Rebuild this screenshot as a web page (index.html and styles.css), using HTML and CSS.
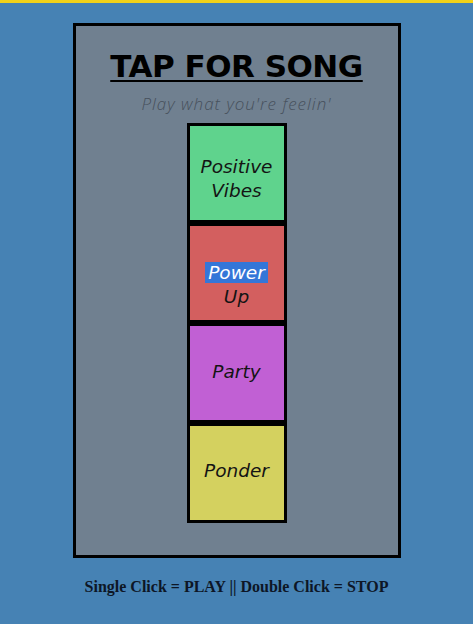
FILE: index.html
```html
<!DOCTYPE html>
<html>
<head>
<meta charset="utf-8">
<link rel="stylesheet" href="styles.css">
</head>
<body>
<main class="card">
  <h1 class="title">TAP FOR SONG</h1>
  <p class="subtitle">Play what you're feelin'</p>
  <div class="buttons">
    <div class="btn btn-green"><div class="label">Positive<br>Vibes</div></div>
    <div class="btn btn-red"><div class="label"><span class="sel">Power</span><br>Up</div></div>
    <div class="btn btn-purple"><div class="label">Party</div></div>
    <div class="btn btn-yellow"><div class="label">Ponder</div></div>
  </div>
</main>
<p class="hint">Single Click = PLAY || Double Click = STOP</p>
</body>
</html>
```
FILE: styles.css
```css
html, body {
  margin: 0;
  padding: 0;
}
body {
  background: #4682b4;
  border-top: 3px solid #f2d21a;
  padding-top: 20px;
  min-height: 600px;
  font-family: "DejaVu Sans", sans-serif;
}
.card {
  width: 322px;
  margin: 0 auto;
  border: 3px solid #000;
  background: #708090;
  padding: 22px 0 32px;
  display: flex;
  flex-direction: column;
  align-items: center;
}
.title {
  margin: 0;
  font-family: "DejaVu Sans", sans-serif;
  font-weight: bold;
  font-size: 31px;
  line-height: 36px;
  letter-spacing: -0.5px;
  text-decoration: underline;
  text-decoration-thickness: 2px;
  text-underline-offset: 3px;
  color: #000;
}
.subtitle {
  margin: 10px 0 0;
  font-family: "Open Sans", sans-serif;
  font-style: italic;
  font-weight: 300;
  font-size: 17px;
  line-height: 20px;
  letter-spacing: 1px;
  color: #47505c;
}
.buttons {
  margin-top: 9px;
  display: flex;
  flex-direction: column;
}
.btn {
  box-sizing: border-box;
  width: 100px;
  height: 100px;
  border: 3px solid #000;
  display: flex;
  align-items: center;
  justify-content: center;
  text-align: center;
  font-family: "DejaVu Sans", sans-serif;
  font-style: italic;
  font-size: 18.5px;
  line-height: 24px;
  color: #141414;
}
.btn-green { background: #5fd38d; padding-top: 12px; }
.btn-red { background: #d35f5f; padding-top: 24px; }
.btn-purple { background: #c160d4; padding-bottom: 2px; }
.btn-yellow { background: #d4d15f; padding-bottom: 4px; }
.sel {
  background: #3476d8;
  color: #fff;
  padding: 0 3px;
}
.hint {
  margin: 20px 0 0;
  text-align: center;
  font-family: "Liberation Serif", serif;
  font-weight: bold;
  font-size: 16px;
  color: #0d1626;
}
```
